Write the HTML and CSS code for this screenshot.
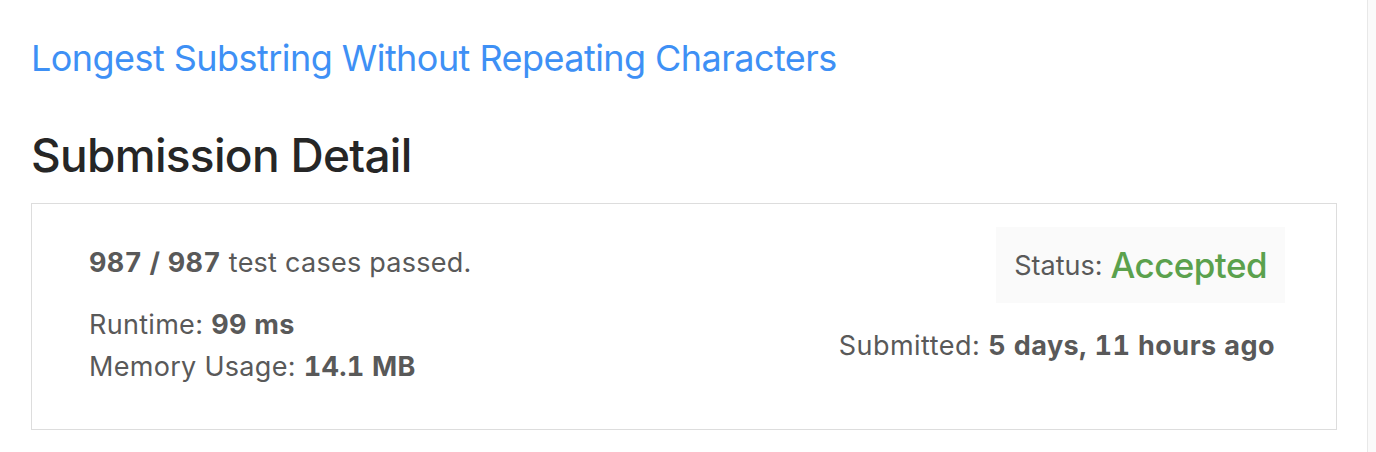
FILE: index.html
```html
<!DOCTYPE html>
<html>
<head>
<meta charset="utf-8">
<link rel="stylesheet" href="styles.css">
</head>
<body>
<div class="page">
  <main class="main">
    <a class="problem-link" href="#">Longest Substring Without Repeating Characters</a>
    <h1 class="page-title">Submission Detail</h1>
    <section class="card">
      <div class="stats">
        <p class="passed"><strong>987 / 987</strong> test cases passed.</p>
        <p class="stat">Runtime: <strong>99 ms</strong></p>
        <p class="stat">Memory Usage: <strong>14.1 MB</strong></p>
      </div>
      <div class="meta">
        <div class="status-box">
          <span class="status-label">Status:</span>
          <span class="status-value">Accepted</span>
        </div>
        <p class="submitted">Submitted: <strong>5 days, 11 hours ago</strong></p>
      </div>
    </section>
  </main>
  <div class="side"></div>
</div>
</body>
</html>
```

FILE: styles.css
```css
html, body {
  margin: 0;
  padding: 0;
  background: #ffffff;
}
body {
  font-family: Inter, "Liberation Sans", Arial, sans-serif;
  color: #595959;
}
.page {
  display: flex;
  height: 452px;
  overflow: hidden;
}
.main {
  flex: none;
  width: 1306px;
  padding: 38px 30px 0 31px;
  border-right: 1px solid #e8e8e8;
}
.side {
  flex: 1;
  background: #fafafa;
}
.problem-link {
  display: block;
  font-size: 36px;
  line-height: 40px;
  color: #3e90f5;
  text-decoration: none;
  letter-spacing: -0.55px;
}
.page-title {
  margin: 49px 0 0;
  font-size: 46px;
  line-height: 56px;
  font-weight: 500;
  color: #262626;
  letter-spacing: -0.7px;
}
.card {
  margin-top: 20px;
  height: 225px;
  border: 1px solid #dddddd;
  display: flex;
  justify-content: space-between;
  padding: 0 51px 0 57px;
}
.stats {
  padding-top: 38px;
}
.stats p {
  margin: 0;
  font-size: 27px;
  line-height: 42px;
  letter-spacing: 0.3px;
}
.stats .passed {
  margin-bottom: 20px;
  letter-spacing: 0.25px;
}
strong {
  font-weight: 700;
  font-variant-numeric: tabular-nums;
}
.meta {
  display: flex;
  flex-direction: column;
  align-items: flex-end;
  padding-top: 23px;
}
.status-box {
  height: 76px;
  display: flex;
  align-items: center;
  gap: 8px;
  padding: 0 18px 0 18px;
  background: #fafafa;
}
.status-label {
  font-size: 27px;
  letter-spacing: 0px;
}
.status-value {
  font-size: 35px;
  color: #5ba14d;
  font-weight: 500;
  letter-spacing: -0.55px;
}
.submitted {
  margin: 22px 10px 0 0;
  font-size: 27px;
  line-height: 42px;
  letter-spacing: 0.45px;
}
```
